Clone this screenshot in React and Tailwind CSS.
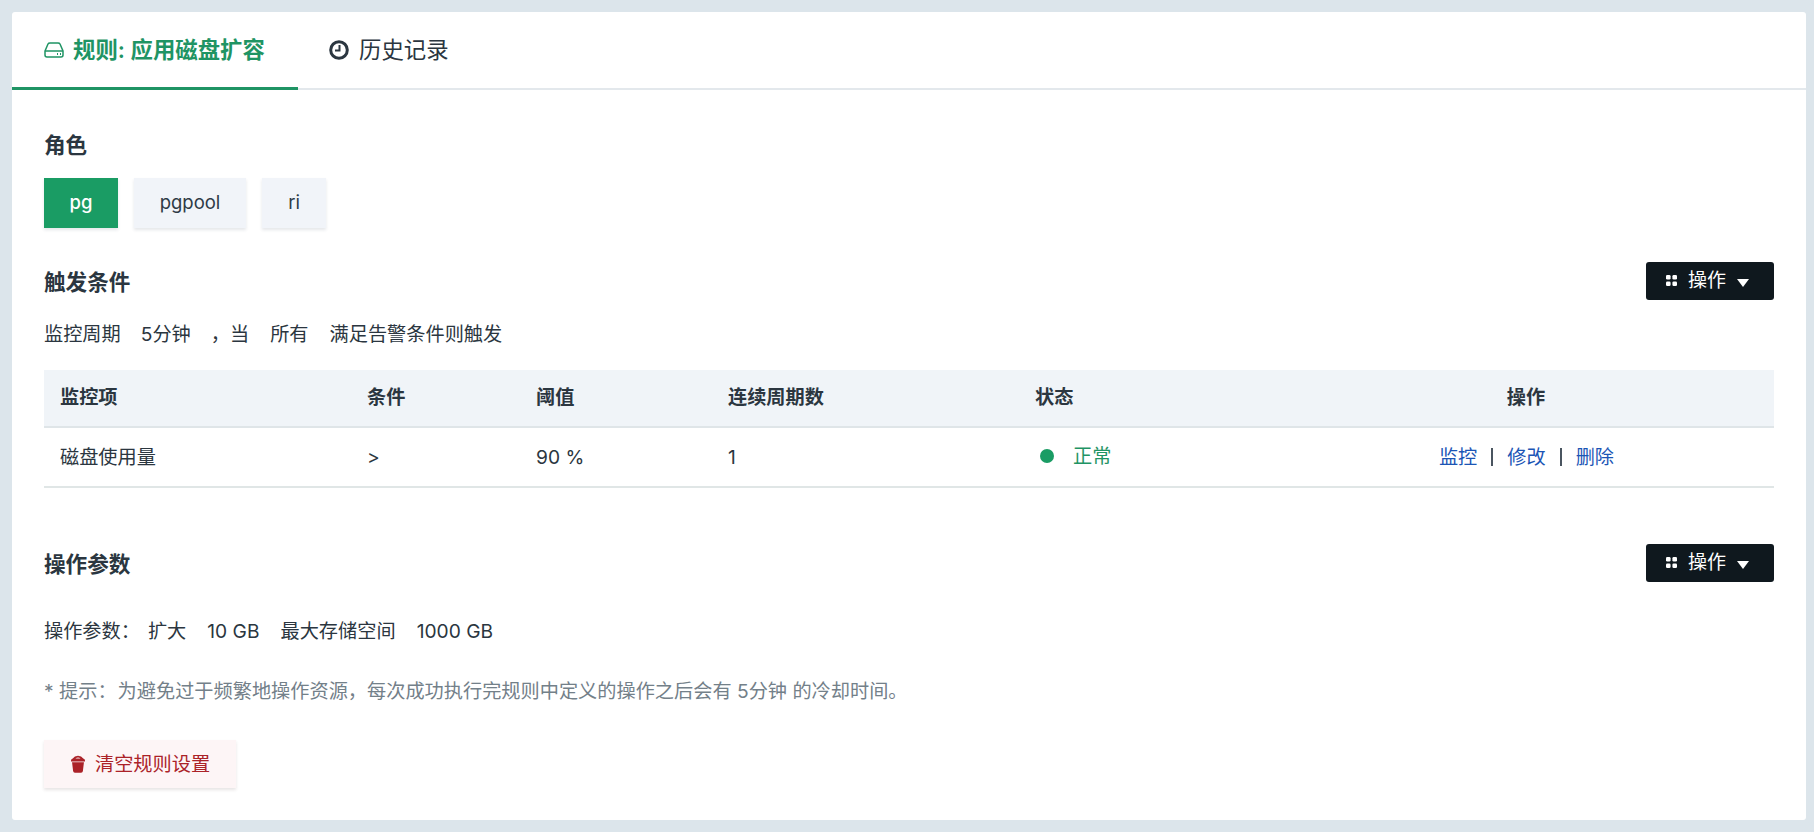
import React from "react";

const font = { fontFamily: '"Inter","Noto Sans CJK SC",sans-serif' };

function OpButton() {
  return (
    <button className="flex h-[38px] w-[128px] items-center rounded-[3px] bg-[#0f181e] pl-[20px] text-[19px] text-white">
      <svg width="11" height="11" viewBox="0 0 12 12" className="mr-[11px] mb-[1px]" fill="#fff">
        <rect x="0" y="0" width="5" height="5" rx="1.4" />
        <rect x="7" y="0" width="5" height="5" rx="1.4" />
        <rect x="0" y="7" width="5" height="5" rx="1.4" />
        <rect x="7" y="7" width="5" height="5" rx="1.4" />
      </svg>
      <span className="pt-[1px]">操作</span>
      <svg width="12" height="8" viewBox="0 0 12 8" className="ml-[11px] mt-[3px]" fill="#fff">
        <path d="M0 0h12L6 8z" />
      </svg>
    </button>
  );
}

function RoleTab({ children, active, w }) {
  return (
    <div
      className={
        "flex h-[50px] items-center justify-center text-[18.5px] shadow-[0_2px_3px_rgba(30,50,70,0.12)] " +
        w +
        (active ? " bg-[#1a9c64] font-medium text-white" : " bg-[#f1f4f9] text-[#2e3a46]")
      }
    >
      {children}
    </div>
  );
}

export default function App() {
  return (
    <div style={font} className="h-[832px] w-[1814px] overflow-hidden bg-[#dce5eb] pl-[12px] pt-[12px] text-[19.2px] text-[#2b3640]">
      <div className="h-[808px] w-[1794px] rounded-[3px] bg-white">
        <div className="flex h-[78px] border-b-2 border-[#e3e8ec]">
          <div className="flex h-[78px] w-[286px] items-center border-b-[3px] border-[#1f9464] pl-[32px] text-[22.4px] font-semibold text-[#1f9464]">
            <svg width="20" height="16" viewBox="0 0 20 16" fill="none" stroke="#1f9464" strokeWidth="1.5" className="mr-[9px]">
              <path d="M1 9 L4 2 Q4.5 1 6 1 H14 Q15.5 1 16 2 L19 9 V13 Q19 15 17 15 H3 Q1 15 1 13 Z" />
              <path d="M1 9 H19" />
              <path d="M13 12 h1 M16 12 h1" strokeWidth="2" />
            </svg>
            <span>规则: 应用磁盘扩容</span>
          </div>
          <div className="flex h-[78px] items-center pl-[31px] pb-[2px] text-[22.4px] text-[#2b3640]">
            <svg width="20" height="20" viewBox="0 0 20 20" fill="none" stroke="#2b3640" className="mr-[10px]">
              <circle cx="10" cy="10" r="8.3" strokeWidth="3" />
              <path d="M10.5 5 V10.5 H6" strokeWidth="2" />
            </svg>
            <span>历史记录</span>
          </div>
        </div>

        <div className="px-[32px] pt-[40px]">
          <h3 className="pb-[1px] text-[21.6px] font-semibold leading-[30px]">角色</h3>
          <div className="mt-[17px] flex gap-[16px]">
            <RoleTab active w="w-[74px]">pg</RoleTab>
            <RoleTab w="w-[112px]">pgpool</RoleTab>
            <RoleTab w="w-[64px]">ri</RoleTab>
          </div>

          <div className="mt-[34px] flex h-[38px] items-center justify-between">
            <h3 className="pt-[2px] text-[21.6px] font-semibold">触发条件</h3>
            <OpButton />
          </div>
          <div className="mt-[20px] flex h-[28px] items-center">
            <span>监控周期</span>
            <span className="ml-[20px]">5分钟</span>
            <span className="ml-[20px]">，当</span>
            <span className="ml-[21px]">所有</span>
            <span className="ml-[21px]">满足告警条件则触发</span>
          </div>

          <div className="mt-[22px] grid grid-cols-[307px_169px_192px_307px_259px_1fr]">
            {["监控项", "条件", "阈值", "连续周期数", "状态"].map((t) => (
              <div key={t} className="flex h-[58px] items-center border-b-2 border-[#dfe5e8] bg-[#f0f4f8] pl-[16px] pb-[2px] font-semibold">
                {t}
              </div>
            ))}
            <div className="flex h-[58px] items-center justify-center border-b-2 border-[#dfe5e8] bg-[#f0f4f8] pb-[2px] font-semibold">操作</div>

            <div className="flex h-[60px] items-center border-b-2 border-[#e0e6e6] pl-[16px]">磁盘使用量</div>
            <div className="flex h-[60px] items-center border-b-2 border-[#e0e6e6] pl-[16px]">&gt;</div>
            <div className="flex h-[60px] items-center border-b-2 border-[#e0e6e6] pl-[16px]">90 %</div>
            <div className="flex h-[60px] items-center border-b-2 border-[#e0e6e6] pl-[16px]">1</div>
            <div className="flex h-[60px] items-center border-b-2 border-[#e0e6e6] pl-[21px] pb-[2px] text-[#1f9464]">
              <span className="mr-[19px] h-[14px] w-[14px] rounded-full bg-[#1a9c64]" />
              正常
            </div>
            <div className="flex h-[60px] items-center justify-center gap-[14px] border-b-2 border-[#e0e6e6] pl-[1px]">
              <a className="text-[#1b55b5]">监控</a>
              <span className="h-[18px] w-[2px] bg-[#4a5560]" />
              <a className="text-[#1b55b5]">修改</a>
              <span className="h-[18px] w-[2px] bg-[#4a5560]" />
              <a className="text-[#1b55b5]">删除</a>
            </div>
          </div>

          <div className="mt-[56px] flex h-[38px] items-center justify-between">
            <h3 className="pt-[2px] text-[21.6px] font-semibold">操作参数</h3>
            <OpButton />
          </div>
          <div className="mt-[35px] flex h-[28px] items-center">
            <span>操作参数：</span>
            <span className="ml-[8px]">扩大</span>
            <span className="ml-[21px]">10 GB</span>
            <span className="ml-[21px]">最大存储空间</span>
            <span className="ml-[21px]">1000 GB</span>
          </div>
          <div className="mt-[32px] flex h-[28px] items-center whitespace-pre text-[#738089]">
            <span className="mr-[1px]">* 提示：</span>为避免过于频繁地操作资源，每次成功执行完规则中定义的操作之后会有 5分钟 的冷却时间。
          </div>
          <button className="mt-[35px] flex h-[48px] w-[192px] items-center bg-[#fdf5f6] pl-[27px] text-[#ab2228] shadow-[0_2px_3px_rgba(60,30,30,0.12)]">
            <svg width="14" height="18" viewBox="0 0 16 20" fill="#ab2228" className="mr-[10px]">
              <path d="M0 6 Q0 4 2 3.6 Q4 .5 8 .5 Q12 .5 14 3.6 Q16 4 16 6 V7 H0 Z M5 3.8 H11 Q8 1.6 5 3.8 Z" fillRule="evenodd" />
              <path d="M1.2 8 H14.8 L13.6 18 Q13.4 20 11.5 20 H4.5 Q2.6 20 2.4 18 Z" />
            </svg>
            清空规则设置
          </button>
        </div>
      </div>
    </div>
  );
}
